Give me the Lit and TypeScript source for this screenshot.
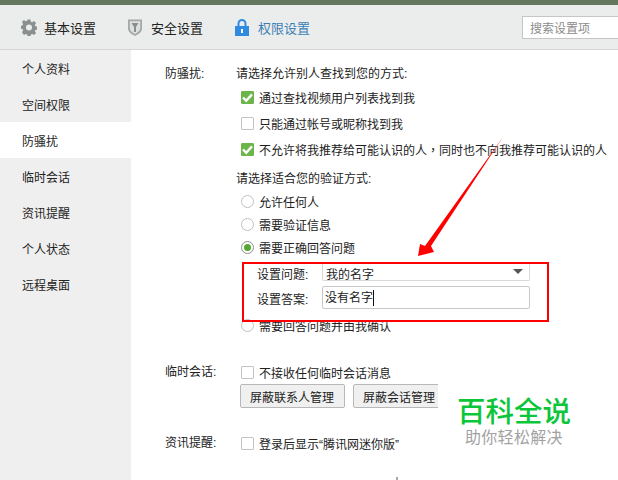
import { LitElement, html, css, svg } from "lit";
import { customElement } from "lit/decorators.js";

const check = (on: boolean) => html`<span class="box ${on ? "on" : ""}">${on
  ? html`<svg width="13" height="13" viewBox="0 0 13 13"><path d="M2 6.5 L5.2 9.8 L11 3.4" fill="none" stroke="#fff" stroke-width="2.4"/></svg>`
  : ""}</span>`;
const radio = (on: boolean) => html`<span class="radio ${on ? "on" : ""}"></span>`;

@customElement("app-root")
export class AppRoot extends LitElement {
  static styles = css`
    :host { display: block; width: 618px; height: 480px; overflow: hidden; position: relative; background: #fff;
      font-family: "Liberation Sans", "Noto Sans CJK SC", sans-serif; font-size: 12px; color: #222; }
    .top { height: 5px; background: #65775c; }
    .head { height: 44px; background: #ebedec; border-bottom: 1px solid #d6d6d6; display: flex; align-items: center; }
    .tab { display: flex; align-items: center; font-size: 13px; color: #222; flex: none; }
    .tab.t1 { margin-left: 21px; gap: 7px; width: 107px; }
    .tab.t2 { gap: 9px; width: 107px; }
    .tab.t3 { gap: 9px; color: #3b7fb6; width: 287px; }
    .search { flex: 1; height: 21px; border: 1px solid #c6c6c6; border-right: none; background: #fff; color: #8c8c8c; display: flex; align-items: center; padding-left: 7px; }
    .main { display: flex; height: 430px; }
    .side { width: 131px; background: #efefef; flex: none; }
    .item { height: 36px; display: flex; align-items: center; padding-left: 22px; color: #222; }
    .item.active { background: #fff; }
    .content { flex: 1; padding-left: 34px; }
    .section { display: grid; grid-template-columns: 71px 1fr; }
    .label { line-height: 18px; }
    .s1 { padding-top: 15px; }
    .s2 { margin-top: 29px; }
    .s3 { margin-top: 26px; }
    .line { height: 18px; line-height: 18px; white-space: nowrap; }
    .line.gap { margin-top: 12px; }
    .row { display: flex; align-items: center; gap: 5px; height: 18px; white-space: nowrap; margin-left: 5px; margin-top: 8px; }
    .row.first { margin-top: 5px; }
    .row.flush { margin-top: 0; }
    .row.r { margin-top: 5px; }
    .row.r.first { margin-top: 4px; }
    .row.r.after { margin-top: 7px; }
    .comma { font-family: "Noto Sans CJK TC", sans-serif; }
    .box { width: 11px; height: 11px; border: 1px solid #c4c4c4; border-radius: 1px; background: #fff; display: inline-flex; flex: none; }
    .box.on { background: #6cb54a; border-color: #6cb54a; }
    .box svg { display: block; margin: -1px; }
    .radio { width: 11px; height: 11px; border: 1px solid #c0c0c0; border-radius: 50%; background: #fff; flex: none; position: relative; }
    .radio.on { border-color: #8f8f8f; }
    .radio.on::after { content: ""; position: absolute; left: 2px; top: 2px; width: 7px; height: 7px; border-radius: 50%; background: #55a82f; }
    .form { display: grid; grid-template-columns: 65px 208px; grid-template-rows: 19px 23px; row-gap: 5px; margin: 6px 0 0 21px; align-items: start; line-height: 18px; }
    .flabel { padding-top: 4px; }
    .flabel.second { padding-top: 5px; }
    .select { box-sizing: border-box; height: 19px; border: 1px solid #d8d8d8; border-top: none; display: flex; align-items: flex-start; justify-content: space-between; padding: 4px 6px 0 3px; background: #fff; border-radius: 0 0 2px 2px; }
    .caret { width: 0; height: 0; margin-top: 3px; border-left: 5px solid transparent; border-right: 5px solid transparent; border-top: 5px solid #555; }
    .input { box-sizing: border-box; height: 23px; border: 1px solid #c8c8c8; display: flex; align-items: center; padding-left: 2px; border-radius: 2px; }
    .cursor { display: inline-block; width: 1px; height: 16px; background: #111; }
    .buttons { display: flex; gap: 8px; margin: 3px 0 0 4px; width: 198px; overflow: hidden; }
    .btn { flex: none; height: 24px; padding: 0 10px 0 9px; box-sizing: border-box; border: 1px solid #b8b8b8; border-radius: 2px; background: #f0f0f0; display: flex; align-items: center; justify-content: center; }
    .overlay { position: absolute; left: 0; top: 0; pointer-events: none; }
    .redbox { position: absolute; left: 242px; top: 262px; width: 303px; height: 56px; border: 2px solid #f00; }
    .wm1 { position: absolute; left: 457px; top: 395px; font-size: 28.5px; font-weight: 500; line-height: 30px; color: #0cc63a; white-space: nowrap; font-family: "Noto Sans CJK SC", sans-serif; }
    .wm2 { position: absolute; left: 465px; top: 428px; font-size: 16px; letter-spacing: 0.3px; line-height: 20px; color: #a2a2a2; white-space: nowrap; }
  `;

  render() {
    const items = ["个人资料", "空间权限", "防骚扰", "临时会话", "资讯提醒", "个人状态", "远程桌面"];
    return html`
      <div class="top"></div>
      <div class="head">
        <div class="tab t1">
          <svg width="16" height="17" viewBox="0 0 18 18"><path fill="#8a8f8f" fill-rule="evenodd" d="M7.4 0h3.200l.5 2.400 1.500.6 2.100-1.300 2.200 2.200-1.300 2.100.6 1.500 2.300.5v3.200l-2.300.5-.6 1.500 1.300 2.100-2.200 2.200-2.100-1.300-1.500.6-.5 2.400H7.400l-.5-2.400-1.500-.6-2.100 1.300L1.100 14.300l1.300-2.100-.6-1.500L-.5 10.200V7l2.300-.5.6-1.500L1.100 2.900 3.300.7l2.100 1.300 1.500-.6z M9 5.600a3.400 3.400 0 1 0 0 6.800 3.400 3.400 0 0 0 0-6.800z"/></svg>
          <span>基本设置</span>
        </div>
        <div class="tab t2">
          <svg width="14" height="17" viewBox="0 0 14 17"><path fill="#a4a8a6" d="M0 .5h14v9c0 3.400-3.400 5.800-7 7.500-3.600-1.700-7-4.100-7-7.500z"/><path fill="#dfe1e0" d="M1.800 2.300h10.400v7c0 2.400-2.600 4.300-5.200 5.600-2.600-1.300-5.200-3.200-5.200-5.600z"/><path fill="#8b8f8e" d="M3.500 4h7L8 8v5H6V8z"/></svg>
          <span>安全设置</span>
        </div>
        <div class="tab t3">
          <svg width="14" height="17" viewBox="0 0 14 17"><path fill="none" stroke="#2f8ae0" stroke-width="2" d="M3.500 7.500V4.500a3.500 3.500 0 0 1 7 0v3"/><rect x="0" y="7" width="14" height="10" fill="#2f8ae0"/><rect x="6" y="10" width="2" height="4" fill="#fff"/></svg>
          <span>权限设置</span>
        </div>
        <div class="search">搜索设置项</div>
      </div>
      <div class="main">
        <div class="side">
          ${items.map((t) => html`<div class="item ${t === "防骚扰" ? "active" : ""}">${t}</div>`)}
        </div>
        <div class="content">
          <div class="section s1">
            <div class="label">防骚扰:</div>
            <div>
              <div class="line">请选择允许别人查找到您的方式:</div>
              <div class="row first">${check(true)}<span>通过查找视频用户列表找到我</span></div>
              <div class="row">${check(false)}<span>只能通过帐号或昵称找到我</span></div>
              <div class="row">${check(true)}<span>不允许将我推荐给可能认识的人<span class="comma">，</span>同时也不向我推荐可能认识的人</span></div>
              <div class="line gap">请选择适合您的验证方式:</div>
              <div class="row r first">${radio(false)}<span>允许任何人</span></div>
              <div class="row r">${radio(false)}<span>需要验证信息</span></div>
              <div class="row r">${radio(true)}<span>需要正确回答问题</span></div>
              <div class="form">
                <div class="flabel">设置问题:</div>
                <div class="select"><span>我的名字</span><span class="caret"></span></div>
                <div class="flabel second">设置答案:</div>
                <div class="input"><span>没有名字</span><span class="cursor"></span></div>
              </div>
              <div class="row r after">${radio(false)}<span>需要回答问题并由我确认</span></div>
            </div>
          </div>
          <div class="section s2">
            <div class="label">临时会话:</div>
            <div>
              <div class="row flush">${check(false)}<span>不接收任何临时会话消息</span></div>
              <div class="buttons"><div class="btn">屏蔽联系人管理</div><div class="btn">屏蔽会话管理</div></div>
            </div>
          </div>
          <div class="section s3">
            <div class="label">资讯提醒:</div>
            <div><div class="row flush">${check(false)}<span>登录后显示“腾讯网迷你版”</span></div></div>
          </div>
        </div>
      </div>
      <svg class="overlay" width="618" height="480" viewBox="0 0 618 480">
        ${svg`<path d="M503 137 L431 246 L434 252 L418 256 L420 244 L425 246 Z" fill="#f00"/><path d="M397 477 V480" stroke="#555" stroke-width="1"/>`}
      </svg>
      <div class="redbox"></div>
      <div class="wm1">百科全说</div>
      <div class="wm2">助你轻松解决</div>
    `;
  }
}
